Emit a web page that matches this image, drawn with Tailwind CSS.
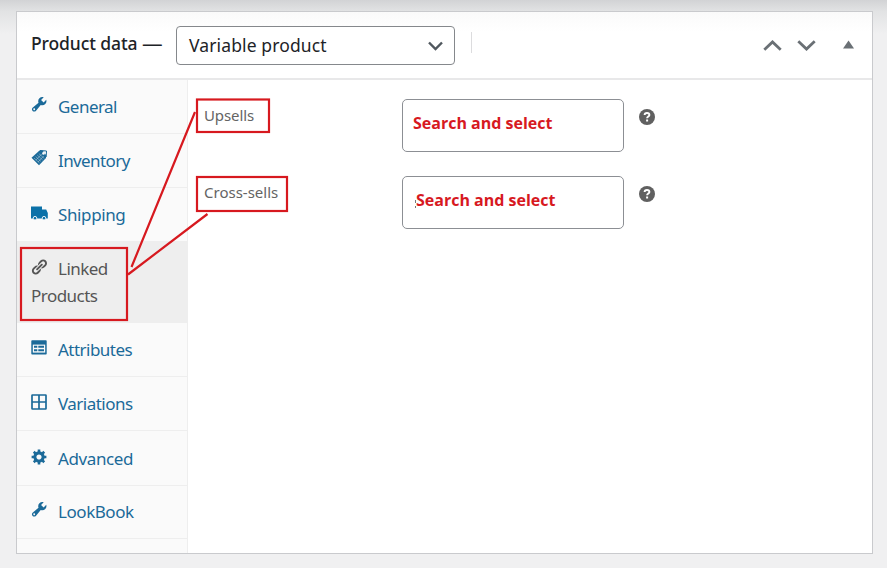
<!DOCTYPE html>
<html lang="en">
<head>
<meta charset="utf-8">
<title>Product data</title>
<script src="https://cdn.jsdelivr.net/npm/@tailwindcss/browser@4"></script>
</head>
<body class="relative h-[568px] w-[887px] overflow-hidden bg-[#f0f0f1] font-['Noto_Sans',sans-serif]">
<svg width="0" height="0" class="absolute">
  <symbol id="wrench" viewBox="1 2 17.6 17.6"><path d="M16.68 9.77c-1.34 1.34-3.3 1.67-4.95.99l-5.41 6.52c-.99.99-2.59.99-3.58 0s-.99-2.59 0-3.57l6.52-5.42c-.68-1.65-.35-3.61.99-4.95 1.28-1.28 3.12-1.62 4.72-1.06l-2.89 2.89 2.82 2.82 2.86-2.87c.53 1.58.18 3.39-1.08 4.65zM3.81 16.21c.4.39 1.04.39 1.43 0 .4-.4.4-1.04 0-1.43-.39-.4-1.03-.4-1.43 0-.39.39-.39 1.03 0 1.43z"/></symbol>
  <symbol id="help" viewBox="0 0 16 16"><circle cx="8" cy="8" r="8"/><path d="M5.6 6.1C5.6 4.7 6.6 4 8 4s2.4.8 2.4 2c0 1.6-2.3 1.6-2.3 3.3" fill="none" stroke="#fff" stroke-width="1.9"/><rect x="7.1" y="10.5" width="2" height="2" fill="#fff"/></symbol>
</svg>
<div class="h-full w-full bg-linear-to-b from-[#d2d3d5] from-0% via-[#e2e3e4] via-[2%] to-[#f0f0f1] to-[6%] pt-[11px] pl-4">
<main class="flex h-[543px] w-[857px] flex-col border border-[#c9cacd] bg-white">
  <header class="flex h-[68px] shrink-0 items-start border-b-2 border-[#e8e8e9] bg-linear-to-b from-[#fafafa] to-white to-30% pl-[14px] text-[#1d2327]">
    <h2 class="mt-[18px] flex w-[145px] text-[17.5px] leading-[26px] font-medium tracking-[-0.1px] whitespace-nowrap"><span>Product data&nbsp;</span><span class="origin-left scale-x-[1.18]">—</span></h2>
    <div class="mt-[14px] flex h-[39px] w-[279px] items-center justify-between rounded-[4px] border border-[#85888c] bg-white pr-[11px] pl-3 text-[17.5px] tracking-[0.12px]">
      <span>Variable product</span>
      <svg class="h-[10px] w-[15px]" viewBox="0 0 15 10" fill="none" stroke="#50575e" stroke-width="2.4"><path d="M1 1.5l6.5 6.5 6.5-6.5"/></svg>
    </div>
    <div class="mt-5 ml-4 h-[21px] w-px bg-[#dcdcde]"></div>
    <div class="mt-[28px] ml-[291px] flex items-start text-[#6a7075]">
      <svg class="h-[11px] w-[19px]" viewBox="0 0 19 11" fill="none" stroke="currentColor" stroke-width="2.8"><path d="M1.3 9.7l8.2-7.8 8.2 7.8"/></svg>
      <svg class="ml-[15px] h-[11px] w-[19px]" viewBox="0 0 19 11" fill="none" stroke="currentColor" stroke-width="2.8"><path d="M1.3 1.3l8.2 7.8 8.2-7.8"/></svg>
      <svg class="ml-[27px] h-[9px] w-[11px]" viewBox="0 0 11 9" fill="currentColor"><path d="M5.5 0.5L11 8.5H0z"/></svg>
    </div>
  </header>
  <div class="flex min-h-0 flex-1">
    <nav class="w-[171px] shrink-0 border-r border-[#eeeeee] bg-[#fafafa] text-[17px] leading-[27px] tracking-[-0.53px] text-[#1b6a99]">
      <a class="flex h-[54px] border-b border-[#eeeeee] pt-[13px] pl-[14px]"><svg class="mt-[4px] mr-[11px] h-4 w-4" fill="currentColor"><use href="#wrench"/></svg><span>General</span></a>
      <a class="flex h-[54px] border-b border-[#eeeeee] pt-[13px] pl-[14px]"><svg class="mt-[2px] mr-[10px] h-[17px] w-[17px]" viewBox="0 0 17 17"><path d="M0.5 8.7L8.5 1.5l3 0 3.5 4.5 0 3L8 16.3z" fill="currentColor"/><path d="M9 1.5l6.5.5-.3 6" fill="none" stroke="currentColor" stroke-width="1"/><path d="M3 9l5.5 5M4.6 7.5l5.5 5M6.2 6l5.5 5M7.8 4.5l5.5 5M4.8 11.2l5.8-6M7 13l5.8-6" stroke="#fafafa" stroke-opacity=".6" stroke-width=".6"/><circle cx="12.5" cy="4.4" r="1.3" fill="#fafafa"/></svg><span class="tracking-[-0.6px]">Inventory</span></a>
      <a class="flex h-[54px] border-b border-[#eeeeee] pt-[13px] pl-[14px]"><svg class="mt-[5px] mr-[10px] h-[15px] w-[17px]" viewBox="0 0 17 15"><path d="M0 0.5h11v3h4.2l1.6 3.5v5.6H0z" fill="#0b71a8"/><g fill="#0b71a8" stroke="#fafafa" stroke-width=".9"><circle cx="4" cy="12.2" r="1.8"/><circle cx="13" cy="12.2" r="1.8"/></g></svg><span class="tracking-[-0.38px]">Shipping</span></a>
      <a class="block h-[81px] border-b border-[#eeeeee] bg-[#eeeeee] pt-[13px] pl-[14px] text-[#555555]"><span class="flex"><svg class="mt-[4px] mr-[11px] h-4 w-4" viewBox="1 1 18 18" fill="currentColor"><path d="M17.74 2.76c1.68 1.69 1.68 4.41 0 6.1l-1.53 1.52c-1.12 1.12-2.7 1.47-4.14 1.09l2.62-2.61.76-.77.76-.76c.84-.84.84-2.2 0-3.04-.84-.85-2.2-.85-3.04 0l-.77.76-3.38 3.38c-.37-1.44-.02-3.02 1.1-4.14l1.52-1.53c1.69-1.68 4.42-1.68 6.1 0zM8.59 13.43l5.34-5.34c.42-.42.42-1.1 0-1.52-.44-.43-1.13-.39-1.53 0l-5.33 5.34c-.42.42-.42 1.1 0 1.52.44.43 1.13.39 1.52 0zm-.76 2.29l4.14-4.15c.38 1.44.03 3.02-1.09 4.14l-1.52 1.53c-1.69 1.68-4.41 1.68-6.1 0-1.68-1.68-1.68-4.42 0-6.1l1.53-1.52c1.12-1.12 2.7-1.47 4.14-1.1l-4.14 4.15c-.85.84-.85 2.2 0 3.05.84.84 2.2.84 3.04 0z"/></svg><span>Linked</span></span><span>Products</span></a>
      <a class="flex h-[54px] border-b border-[#eeeeee] pt-[13px] pl-[14px]"><svg class="mt-[4px] mr-[11px] h-[15px] w-4" viewBox="0 0 16 15"><rect x="0.3" y="0.3" width="15.4" height="14.2" rx=".8" fill="currentColor"/><path d="M1.8 4.6h12.4v8H1.8z" fill="#fafafa"/><path d="M3 5.8h3.3v2H3zM3 9.3h3.3v2H3zM7.3 5.8h5.7v2H7.3zM7.3 9.3h5.7v2H7.3z" fill="currentColor"/></svg><span>Attributes</span></a>
      <a class="flex h-[54px] border-b border-[#eeeeee] pt-[13px] pl-[14px]"><svg class="mt-[4px] mr-[11px] h-4 w-4" viewBox="0 0 16 16" fill="none" stroke="currentColor" stroke-width="1.7"><rect x="1" y="1" width="14" height="14" rx=".4"/><path d="M8 1v14M1 8h14"/></svg><span>Variations</span></a>
      <a class="flex h-[55px] border-b border-[#eeeeee] pt-[14px] pl-[14px]"><svg class="mt-[4px] mr-[11px] h-4 w-4" viewBox="0.3 1.3 18.4 18.4" fill="currentColor"><path d="M18 12h-2.18c-.17.7-.44 1.35-.81 1.93l1.54 1.54-2.1 2.1-1.54-1.54c-.58.36-1.23.63-1.91.79V19H8v-2.18c-.68-.16-1.33-.43-1.91-.79l-1.54 1.54-2.12-2.12 1.54-1.54c-.36-.58-.63-1.23-.79-1.91H1V9.03h2.17c.16-.7.44-1.35.8-1.94L2.43 5.55l2.1-2.1 1.54 1.54c.58-.37 1.24-.64 1.93-.81V2h3v2.18c.68.16 1.33.43 1.91.79l1.54-1.54 2.12 2.12-1.54 1.54c.36.59.64 1.24.8 1.94H18V12zm-8.5 1.5c1.66 0 3-1.34 3-3s-1.34-3-3-3-3 1.34-3 3 1.34 3 3 3z"/></svg><span class="tracking-[-0.4px]">Advanced</span></a>
      <a class="flex h-[53px] border-b border-[#eeeeee] pt-[12px] pl-[14px]"><svg class="mt-[4px] mr-[11px] h-4 w-4" fill="currentColor"><use href="#wrench"/></svg><span class="tracking-[-0.45px]">LookBook</span></a>
    </nav>
    <section class="flex flex-col gap-6 pt-[19px] pl-4">
      <div class="flex h-[53px] items-start text-[#646464]">
        <span class="w-[198px] pt-[5px] text-[15px] leading-[22px] tracking-[-0.1px]">Upsells</span>
        <div class="h-[53px] w-[222px] rounded-[5px] border border-[#8c8f94] pt-[10px] pl-[10px] font-['Open_Sans',sans-serif] text-[16px] leading-[26px] font-bold text-[#d7191f]">Search and select</div>
        <svg class="mt-[10px] ml-[15px] h-4 w-4" fill="#606060"><use href="#help"/></svg>
      </div>
      <div class="flex h-[53px] items-start text-[#646464]">
        <span class="w-[198px] pt-[5px] text-[15px] leading-[22px]">Cross-sells</span>
        <div class="h-[53px] w-[222px] rounded-[5px] border border-[#8c8f94] pt-[10px] pl-[13px] font-['Open_Sans',sans-serif] text-[16px] leading-[26px] font-bold text-[#d7191f]">Search and select</div>
        <svg class="mt-[10px] ml-[15px] h-4 w-4" fill="#606060"><use href="#help"/></svg>
      </div>
    </section>
  </div>
</main>
</div>
<svg class="absolute top-0 left-0" width="887" height="568" fill="none" stroke="#d7191f" stroke-width="2.2">
  <rect x="197" y="99.5" width="72" height="32.5"/>
  <rect x="197" y="177" width="90" height="34"/>
  <rect x="21" y="248" width="106" height="72"/>
  <path d="M195 112L131.5 267M207.5 214L128 274.5"/>
  <path d="M415.5 200v3M415.5 206v2" stroke="#777" stroke-width="1"/>
</svg>
</body>
</html>
